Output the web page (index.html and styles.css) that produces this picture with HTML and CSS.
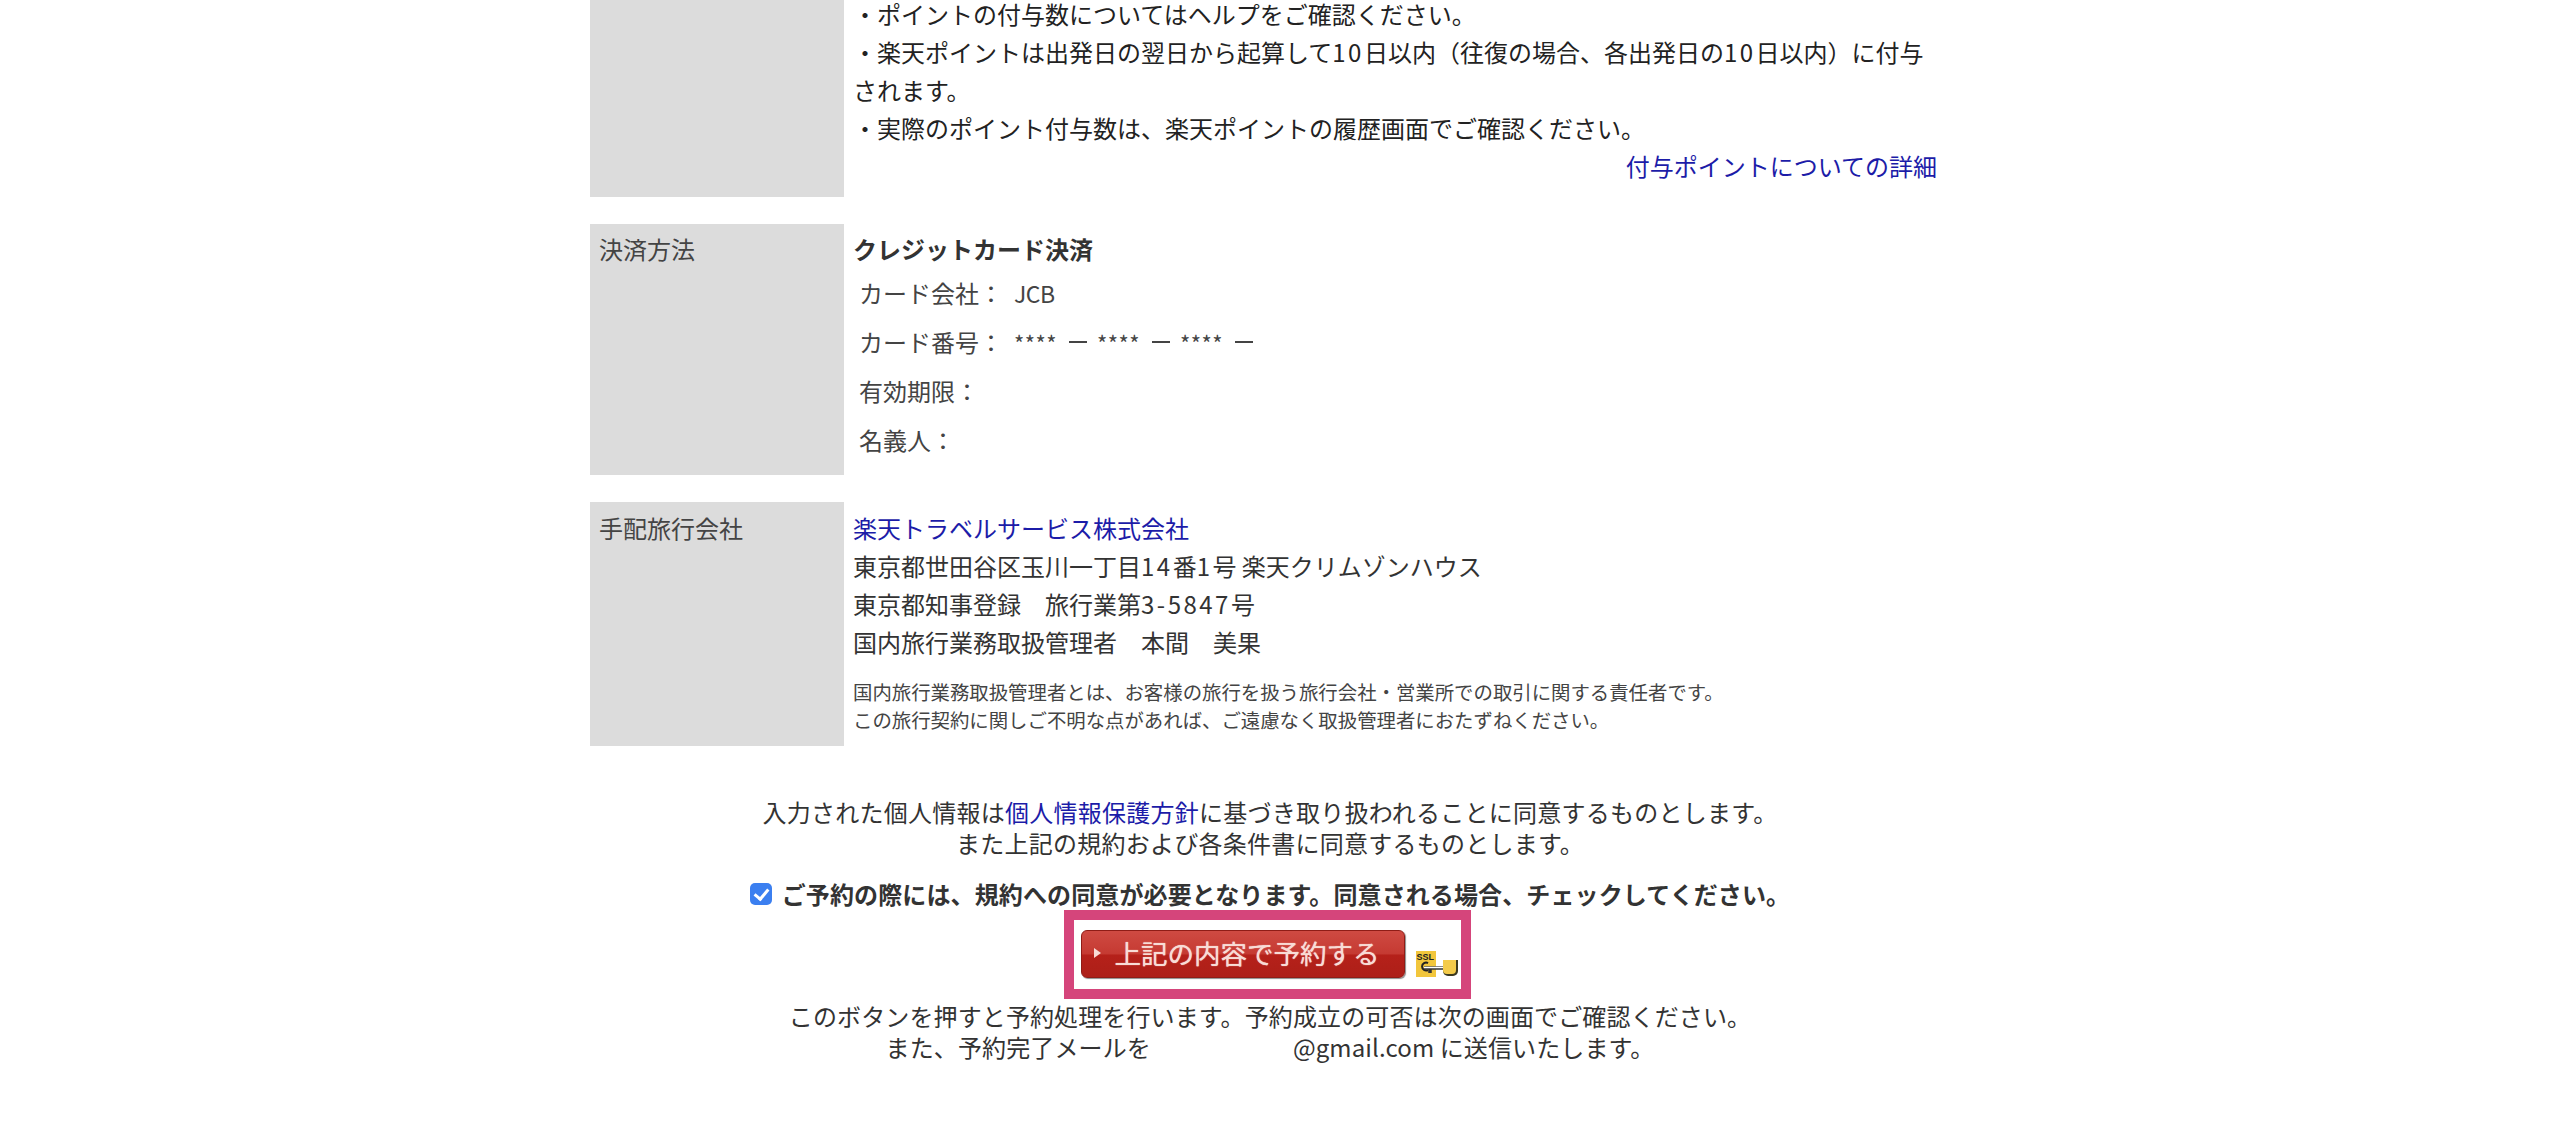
FILE: index.html
```html
<!DOCTYPE html>
<html lang="ja">
<head>
  <meta charset="UTF-8" />
  <meta name="viewport" content="width=device-width, initial-scale=1.0"/>
  <title>予約内容の確認</title>
  <link rel="stylesheet" href="styles.css">
</head>
<body>
  <div class="wrapper">
    <div class="row row-point">
      <div class="row-label"></div>
      <div class="row-value">
        <div>・ポイントの付与数についてはヘルプをご確認ください。</div>
        <div>・楽天ポイントは出発日の翌日から起算して<span class="num">10</span>日以内（往復の場合、各出発日の<span class="num">10</span>日以内）に付与<br>されます。</div>
        <div>・実際のポイント付与数は、楽天ポイントの履歴画面でご確認ください。</div>
        <div class="detail-link"><a href="#">付与ポイントについての詳細</a></div>
      </div>
    </div>

    <div class="row row-payment">
      <div class="row-label">決済方法</div>
      <div class="row-value">
        <div class="pay-title">クレジットカード決済</div>
        <div class="card-row"><span class="card-label">カード会社：</span><span class="card-brand">JCB</span></div>
        <div class="card-row"><span class="card-label">カード番号：</span><span class="card-number"><span>****</span><i></i><span>****</span><i></i><span>****</span><i></i></span></div>
        <div class="card-row"><span class="card-label">有効期限：</span></div>
        <div class="card-row"><span class="card-label">名義人：</span></div>
      </div>
    </div>

    <div class="row row-agency">
      <div class="row-label">手配旅行会社</div>
      <div class="row-value">
        <div><a href="#">楽天トラベルサービス株式会社</a></div>
        <div>東京都世田谷区玉川一丁目<span class="num">14</span>番<span class="num">1</span>号 楽天クリムゾンハウス</div>
        <div>東京都知事登録　旅行業第<span class="num">3-5847</span>号</div>
        <div>国内旅行業務取扱管理者　本間　美果</div>
        <p class="note">国内旅行業務取扱管理者とは、お客様の旅行を扱う旅行会社・営業所での取引に関する責任者です。<br>この旅行契約に関しご不明な点があれば、ご遠慮なく取扱管理者におたずねください。</p>
      </div>
    </div>

    <div class="agree">
      <p class="agree-text">入力された個人情報は<a href="#">個人情報保護方針</a>に基づき取り扱われることに同意するものとします。<br>また上記の規約および各条件書に同意するものとします。</p>
      <label class="agree-check">
        <input type="checkbox" checked>
        <span>ご予約の際には、規約への同意が必要となります。同意される場合、チェックしてください。</span>
      </label>
      <div class="submit-box">
        <button type="button" class="submit-btn"><span class="arrow"></span>上記の内容で予約する</button>
        <svg class="ssl-icon" width="42" height="26" viewBox="0 0 42 26">
          <rect x="0" y="0" width="20" height="26" fill="#f2c63c"/>
          <text x="0.5" y="8.5" font-family="Liberation Sans, sans-serif" font-size="9" font-weight="700" fill="#222">SSL</text>
          <path d="M12 12a4 4 0 1 0 0 7" fill="none" stroke="#222" stroke-width="2"/>
          <path d="M8 17h19M14 17v5" stroke="#333" stroke-width="3.5" fill="none"/>
          <path d="M8 16.500h19" stroke="#fff" stroke-width="1.500" fill="none"/>
          <path d="M27 9h15v11a5 5 0 0 1-5 5h-5a5 5 0 0 1-5-5z" fill="#3c3a20"/>
          <path d="M27 9h13v10a4 4 0 0 1-4 4h-5a4 4 0 0 1-4-4z" fill="#f4cb4a"/>
        </svg>
      </div>
      <p class="submit-note">このボタンを押すと予約処理を行います。予約成立の可否は次の画面でご確認ください。<br>また、予約完了メールを<span class="mail-gap"></span>@gmail.com に送信いたします。</p>
    </div>
  </div>
</body>
</html>
```

FILE: styles.css
```css
html, body {
  height: 1125px;
  overflow: hidden;
}

body {
  margin: 0;
  background-color: #ffffff;
  color: #333;
  font-family: "Noto Sans CJK JP", "Noto Sans", sans-serif;
  font-size: 24px;
  line-height: 38px;
}

a {
  color: #1c1ca8;
  text-decoration: none;
}

p {
  margin: 0;
}

.num {
  letter-spacing: 2.5px;
}

.wrapper {
  width: 1350px;
  margin: -5px 0 0 590px;
}

.row {
  display: flex;
  margin-bottom: 27px;
}

.row-label {
  flex: 0 0 245px;
  padding-left: 9px;
  background-color: #dcdcdc;
  color: #444;
}

.row-value {
  flex: 1;
  padding: 0 3px 0 9px;
}

.row-point .row-value {
  padding-bottom: 12px;
  color: #222;
}

.detail-link {
  text-align: right;
}

.row-payment .row-label,
.row-payment .row-value {
  padding-top: 6px;
}

.row-payment .row-value {
  padding-bottom: 11px;
}

.pay-title {
  font-weight: 700;
}

.card-row {
  display: flex;
  height: 49px;
  align-items: center;
  padding-left: 6px;
  color: #444;
}

.card-label {
  width: 155px;
}

.card-brand {
  font-size: 23px;
  letter-spacing: -0.5px;
}

.card-number {
  display: flex;
  align-items: center;
}

.card-number span {
  width: 45px;
  font-size: 22px;
  letter-spacing: 0.5px;
}

.card-number i {
  width: 18px;
  height: 2px;
  margin: 0 10px;
  background-color: #444;
}

.row-agency .row-label,
.row-agency .row-value {
  padding-top: 7px;
}

.row-agency .row-value {
  padding-bottom: 12px;
}

.note {
  margin-top: 17px;
  font-size: 19.4px;
  line-height: 28px;
  color: #444;
}

.agree {
  margin-top: 50px;
  padding-left: 10px;
  text-align: center;
}

.agree-text {
  line-height: 31px;
  letter-spacing: 0.25px;
}

.agree-check {
  display: flex;
  justify-content: center;
  align-items: center;
  gap: 10px;
  height: 30px;
  margin-top: 21px;
  padding-bottom: 1px;
  font-weight: 700;
  letter-spacing: 0.12px;
}

.agree-check input {
  appearance: none;
  position: relative;
  width: 22px;
  height: 22px;
  margin: 0;
  border-radius: 5px;
  background-color: #3b7ff0;
}

.agree-check input::after {
  content: "";
  position: absolute;
  left: 7px;
  top: 3px;
  width: 6px;
  height: 11px;
  border: solid #ffffff;
  border-width: 0 3px 3px 0;
  transform: rotate(40deg);
}

.submit-box {
  display: flex;
  align-items: flex-end;
  gap: 11px;
  width: max-content;
  margin: 0 auto;
  padding: 10px 3px 11px 7px;
  border: 10px solid #d5457b;
  transform: translateX(-3px);
}

.submit-btn {
  display: flex;
  align-items: center;
  width: 324px;
  height: 48px;
  padding: 0 0 3px 12px;
  border: 1px solid #8f1c16;
  border-radius: 6px;
  background: linear-gradient(to bottom, #cf4a42 0%, #c53a32 50%, #b5211a 52%, #ad1f18 100%);
  box-shadow: 1px 1px 1px rgba(0, 0, 0, 0.45);
  color: #f8dcd6;
  font-family: inherit;
  font-size: 26.500px;
  font-weight: 400;
  text-shadow: 0 0 1px #f8dcd6;
  cursor: pointer;
}

.arrow {
  width: 0;
  height: 0;
  margin-right: 14px;
  border-top: 5px solid transparent;
  border-bottom: 5px solid transparent;
  border-left: 7px solid #f8dcd6;
}

.ssl-icon {
  margin-bottom: 1px;
}

.submit-note {
  margin-top: 1px;
  line-height: 31px;
  letter-spacing: 0.12px;
}

.mail-gap {
  display: inline-block;
  width: 142px;
}
```
